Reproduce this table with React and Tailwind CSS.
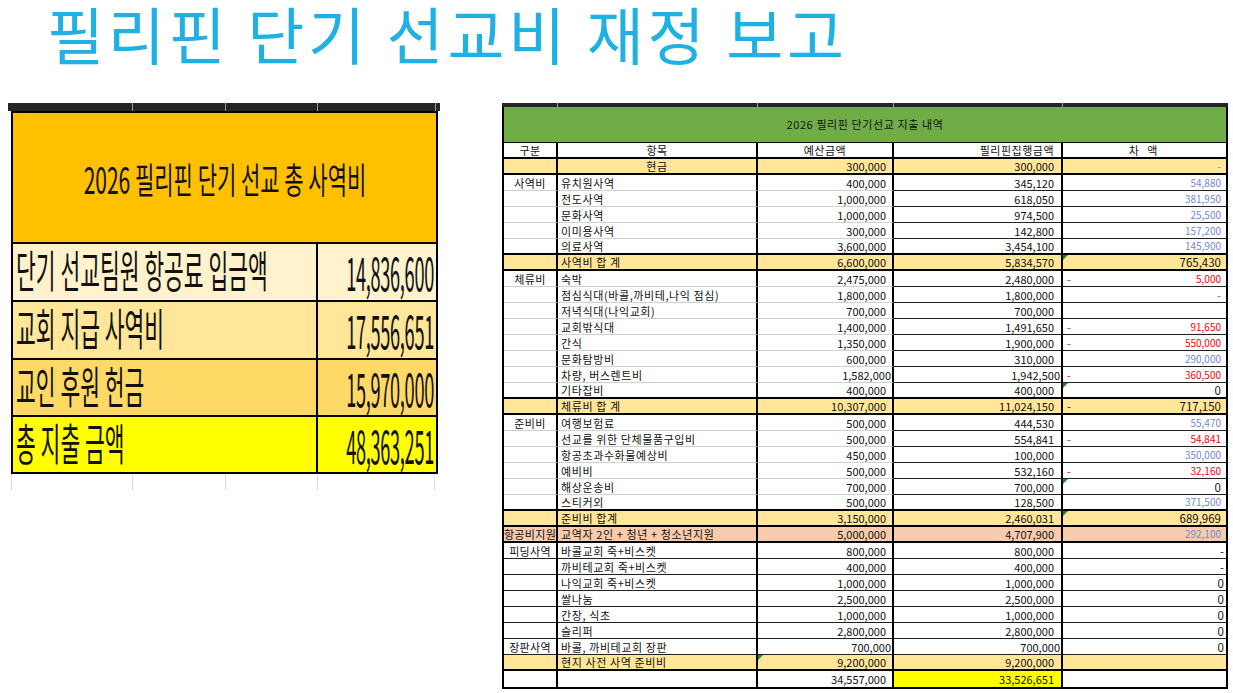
import React from "react";

const BLUE = "text-[#6f87dc]";
const RED = "text-[#ff0000]";

// b: bottom border type: thick | gray | black
const rows = [
  { bg: "y", b: "thick", c1: "", c2: "현금", c2c: true, c3: "300,000", c4: "300,000", c5: { v: "-", col: "blue" } },
  { b: "gray", c1: "사역비", c2: "유치원사역", c3: "400,000", c4: "345,120", c5: { v: "54,880", col: "blue" } },
  { b: "gray", c2: "전도사역", c3: "1,000,000", c4: "618,050", c5: { v: "381,950", col: "blue" } },
  { b: "gray", c2: "문화사역", c3: "1,000,000", c4: "974,500", c5: { v: "25,500", col: "blue" } },
  { b: "gray", c2: "이미용사역", c3: "300,000", c4: "142,800", c5: { v: "157,200", col: "blue" } },
  { b: "thick", c2: "의료사역", c3: "3,600,000", c4: "3,454,100", c5: { v: "145,900", col: "blue" } },
  { bg: "y", b: "thick", c2: "사역비 합 계", c3: "6,600,000", c4: "5,834,570", c5: { v: "765,430", col: "black" }, tri5: true },
  { b: "gray", c1: "체류비", c2: "숙박", c3: "2,475,000", c4: "2,480,000", c5: { v: "5,000", col: "red", neg: true } },
  { b: "gray", c2: "점심식대(바콜,까비테,나익 점심)", c3: "1,800,000", c4: "1,800,000", c5: { v: "-", col: "red" } },
  { b: "gray", c2: "저녁식대(나익교회)", c3: "700,000", c4: "700,000", c5: { v: "" } },
  { b: "gray", c2: "교회밖식대", c3: "1,400,000", c4: "1,491,650", c5: { v: "91,650", col: "red", neg: true } },
  { b: "gray", c2: "간식", c3: "1,350,000", c4: "1,900,000", c5: { v: "550,000", col: "red", neg: true } },
  { b: "gray", c2: "문화탐방비", c3: "600,000", c4: "310,000", c5: { v: "290,000", col: "blue" } },
  { b: "gray", c2: "차량, 버스렌트비", c3: "1,582,000", c4: "1,942,500", c5: { v: "360,500", col: "red", neg: true }, tight: true },
  { b: "thick", c2: "기타잡비", c3: "400,000", c4: "400,000", c5: { v: "0", col: "black" }, tri5: true },
  { bg: "y", b: "thick", c2: "체류비 합 계", c3: "10,307,000", c4: "11,024,150", c5: { v: "717,150", col: "black", neg: true, negBlack: true } },
  { b: "gray", c1: "준비비", c2: "여행보험료", c3: "500,000", c4: "444,530", c5: { v: "55,470", col: "blue" } },
  { b: "gray", c2: "선교를 위한 단체물품구입비", c3: "500,000", c4: "554,841", c5: { v: "54,841", col: "red", neg: true } },
  { b: "gray", c2: "항공초과수화물예상비", c3: "450,000", c4: "100,000", c5: { v: "350,000", col: "blue" } },
  { b: "gray", c2: "예비비", c3: "500,000", c4: "532,160", c5: { v: "32,160", col: "red", neg: true } },
  { b: "gray", c2: "해상운송비", c3: "700,000", c4: "700,000", c5: { v: "0", col: "black" }, tri5: true },
  { b: "thick", c2: "스티커외", c3: "500,000", c4: "128,500", c5: { v: "371,500", col: "blue" } },
  { bg: "y", b: "thick", c2: "준비비 합계", c3: "3,150,000", c4: "2,460,031", c5: { v: "689,969", col: "black" }, tri5: true },
  { bg: "s", b: "thick", c1: "항공비지원", c2: "교역자 2인 + 청년 + 청소년지원", c3: "5,000,000", c4: "4,707,900", c5: { v: "292,100", col: "blue" } },
  { b: "black", c1: "피딩사역", c2: "바콜교회 죽+비스켓", c3: "800,000", c4: "800,000", c5: { v: "-", col: "black", edge: true } },
  { b: "black", c2: "까비테교회 죽+비스켓", c3: "400,000", c4: "400,000", c5: { v: "-", col: "black", edge: true } },
  { b: "black", c2: "나익교회 죽+비스켓", c3: "1,000,000", c4: "1,000,000", c5: { v: "0", col: "black", edge: true } },
  { b: "black", c2: "쌀나눔", c3: "2,500,000", c4: "2,500,000", c5: { v: "0", col: "black", edge: true } },
  { b: "black", c2: "간장, 식초", c3: "1,000,000", c4: "1,000,000", c5: { v: "0", col: "black", edge: true } },
  { b: "black", c2: "슬리퍼", c3: "2,800,000", c4: "2,800,000", c5: { v: "0", col: "black", edge: true } },
  { b: "black", c1: "장판사역", c2: "바콜, 까비테교회 장판", c3: "700,000", c4: "700,000", c5: { v: "0", col: "black", edge: true }, tight: true },
  { bg: "y", b: "thick", c2: "현지 사전 사역 준비비", c3: "9,200,000", c4: "9,200,000", c5: { v: "" }, tri3: true },
  { b: "none", c2: "", c3: "34,557,000", c4: "33,526,651", c4bg: true, c5: { v: "" } },
];

function Tri() {
  return (
    <span className="absolute left-0 top-0 h-0 w-0 border-t-[5px] border-r-[5px] border-t-[#1e8c1e] border-r-transparent" />
  );
}

function Row({ r }) {
  const bg = r.bg === "y" ? "bg-[#ffe699]" : r.bg === "s" ? "bg-[#f8cbad]" : "bg-white";
  const b13 =
    r.b === "thick"
      ? "border-b-2 border-b-black"
      : r.b === "gray"
      ? "border-b border-b-[#d0d0d0]"
      : r.b === "black"
      ? "border-b border-b-[#222]"
      : "";
  const b45 =
    r.b === "thick" ? "border-b-2 border-b-black" : r.b === "none" ? "" : "border-b border-b-[#222]";
  const c5 = r.c5;
  const colCls = c5.col === "blue" ? BLUE : c5.col === "red" ? RED : "text-[#111]";
  const bigger = c5.col === "black";
  return (
    <div className={`flex h-[16px] ${bg} text-[11px] leading-[14px] text-[#111]`}>
      <div className={`flex w-[54px] shrink-0 items-center justify-center overflow-hidden whitespace-nowrap border-r-2 border-r-black tracking-[0.3px] ${b13}`}>
        {r.c1}
      </div>
      <div
        className={`flex w-[200px] shrink-0 items-center whitespace-nowrap border-r-2 border-r-black tracking-[0.6px] ${b13} ${
          r.c2c ? "justify-center" : "pl-[3px]"
        }`}
      >
        {r.c2}
      </div>
      <div className={`relative flex w-[136px] shrink-0 items-center justify-end whitespace-nowrap border-r-2 border-r-black ${b13} ${r.tight ? "pr-[1px]" : "pr-[6px]"}`}>
        {r.tri3 && <Tri />}
        {r.c3}
      </div>
      <div
        className={`flex w-[169px] shrink-0 items-center justify-end whitespace-nowrap border-r-2 border-r-black ${b45} ${
          r.c4bg ? "bg-[#ffff00]" : ""
        } ${r.tight ? "pr-[1px]" : "pr-[7px]"}`}
      >
        {r.c4}
      </div>
      <div className={`relative flex flex-1 items-center justify-between whitespace-nowrap ${b45} pl-[4px] ${c5.edge ? "pr-[2px]" : "pr-[5px]"}`}>
        {r.tri5 && <Tri />}
        <span className={c5.negBlack ? "text-[#111]" : RED}>{c5.neg ? "-" : ""}</span>
        <span className={`${colCls} ${bigger ? "text-[11.5px]" : "text-[10px]"}`}>{c5.v}</span>
      </div>
    </div>
  );
}

function LeftTable() {
  return (
    <div className="ml-[8px] w-[432px] shrink-0">
      {/* excel column header strip */}
      <div className="flex h-[8px] bg-[#252525]">
        <div className="w-[125px] border-r border-r-[#9a9a9a]" />
        <div className="w-[93px] border-r border-r-[#9a9a9a]" />
        <div className="w-[92px] border-r border-r-[#9a9a9a]" />
        <div className="w-[118px] border-r border-r-[#9a9a9a]" />
        <div className="flex-1" />
      </div>
      <div className="ml-[3px] w-[427px] border-2 border-black">
        <div className="flex h-[129px] items-center justify-center bg-[#ffc000] pl-[1px]">
          <span className="inline-block origin-center scale-y-[1.75] text-[21px] leading-[24px] text-[#111]">
            2026 필리핀 단기 선교 총 사역비
          </span>
        </div>
        {[
          { l: "단기 선교팀원 항공료 입금액", v: "14,836,600", bg: "bg-[#fff2cc]", h: "h-[58px]" },
          { l: "교회 지급 사역비", v: "17,556,651", bg: "bg-[#ffe699]", h: "h-[58px]" },
          { l: "교인 후원 헌금", v: "15,970,000", bg: "bg-[#ffd966]", h: "h-[57px]" },
          { l: "총 지출 금액", v: "48,363,251", bg: "bg-[#ffff00]", h: "h-[57px]" },
        ].map((r) => (
          <div key={r.l} className={`flex ${r.h} border-t-2 border-t-black ${r.bg}`}>
            <div className="flex w-[305px] items-center border-r-2 border-r-black pb-[4px] pl-[3px]">
              <span className="inline-block origin-center scale-y-[2.05] whitespace-nowrap text-[21.5px] leading-[24px] text-[#111]">
                {r.l}
              </span>
            </div>
            <div className="flex flex-1 items-center justify-end pb-[2px] pr-[2px]">
              <span className="inline-block origin-center scale-y-[2.55] whitespace-nowrap text-[18.2px] leading-[20px] tracking-[-0.3px] text-[#111]">
                {r.v}
              </span>
            </div>
          </div>
        ))}
      </div>
      {/* faint gridlines below */}
      <div className="ml-[3px] flex h-[16px] w-[427px]">
        <div className="w-[121px] border-l border-l-[#dcdcdc]" />
        <div className="w-[93px] border-l border-l-[#dcdcdc]" />
        <div className="w-[92px] border-l border-l-[#dcdcdc]" />
        <div className="w-[118px] border-l border-r border-l-[#dcdcdc] border-r-[#dcdcdc]" />
      </div>
    </div>
  );
}

function RightTable() {
  return (
    <div className="ml-[62px] w-[726px] shrink-0">
      <div className="flex h-[4px] bg-[#252525]">
        <div className="w-[56px] border-r border-r-[#9a9a9a]" />
        <div className="w-[200px] border-r border-r-[#9a9a9a]" />
        <div className="w-[136px] border-r border-r-[#9a9a9a]" />
        <div className="w-[169px] border-r border-r-[#9a9a9a]" />
        <div className="flex-1" />
      </div>
      <div className="border-x-2 border-b-2 border-black">
        <div className="flex h-[36px] items-center justify-center border-b border-b-black bg-[#70ad47] text-[11px] tracking-[0.6px] text-[#111]">
          2026 필리핀 단기선교 지출 내역
        </div>
        <div className="flex h-[16px] bg-white text-[11px] leading-[14px] text-[#111]">
          <div className="flex w-[54px] shrink-0 items-center justify-center border-b-2 border-r-2 border-black tracking-[0.5px]">구분</div>
          <div className="flex w-[200px] shrink-0 items-center justify-center border-b-2 border-r-2 border-black tracking-[0.5px]">항목</div>
          <div className="flex w-[136px] shrink-0 items-center justify-center border-b-2 border-r-2 border-black tracking-[0.5px]">예산금액</div>
          <div className="flex w-[169px] shrink-0 items-center justify-end border-b-2 border-r-2 border-black pr-[7px] tracking-[0.5px]">필리핀집행금액</div>
          <div className="flex flex-1 items-center justify-center border-b-2 border-black tracking-[3px]">차 액</div>
        </div>
        {rows.map((r, i) => (
          <Row key={i} r={r} />
        ))}
      </div>
    </div>
  );
}

export default function App() {
  return (
    <div className="h-[693px] w-[1233px] overflow-hidden bg-white font-['Noto_Sans_CJK_KR','Noto_Sans',sans-serif]">
      <div className="h-[103px] pl-[47px]">
        <div className="whitespace-nowrap text-[62px] font-normal leading-[66px] tracking-[3.8px] text-[#1fb0e4]">
          필리핀 단기 선교비 재정 보고
        </div>
      </div>
      <div className="flex items-start">
        <LeftTable />
        <RightTable />
      </div>
    </div>
  );
}
